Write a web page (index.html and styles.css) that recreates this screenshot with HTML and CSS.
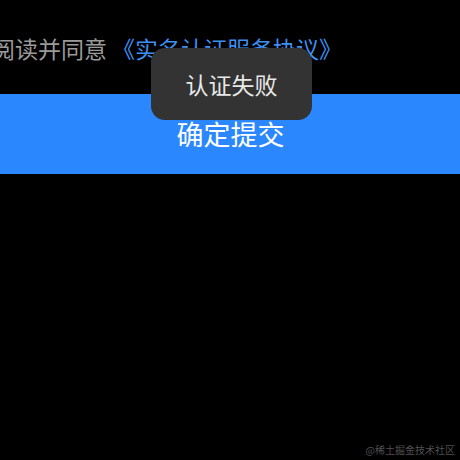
FILE: index.html
```html
<!DOCTYPE html>
<html lang="zh">
<head>
<meta charset="utf-8">
<link rel="stylesheet" href="styles.css">
</head>
<body>
<div class="page">
  <div class="agree">阅读并同意<span class="link">《实名认证服务协议》</span></div>
  <div class="submit">确定提交</div>
  <div class="toast">认证失败</div>
  <div class="watermark">@稀土掘金技术社区</div>
</div>
</body>
</html>
```
FILE: styles.css
```css
html, body {
  margin: 0;
  padding: 0;
  background: #000;
}
.page {
  position: relative;
  width: 460px;
  height: 460px;
  overflow: hidden;
  font-family: "Noto Sans CJK SC", "Noto Sans", sans-serif;
}
.agree {
  margin: 32px 0 0 -8px;
  height: 32px;
  line-height: 32px;
  font-size: 23px;
  color: #9a9a9a;
  white-space: nowrap;
}
.link {
  margin-left: 5px;
  color: #3d8ff2;
}
.submit {
  margin-top: 30px;
  height: 80px;
  background: #2b87fd;
  color: #fff;
  font-size: 27px;
  line-height: 80px;
  text-align: center;
  padding-left: 1px;
}
.toast {
  position: absolute;
  left: 151px;
  top: 48px;
  width: 161px;
  height: 72px;
  border-radius: 14px;
  background: #333333;
  color: #e8e8e8;
  font-size: 23px;
  line-height: 72px;
  text-align: center;
}
.watermark {
  position: absolute;
  right: 5px;
  bottom: 3px;
  font-size: 10px;
  line-height: 14px;
  color: #505050;
}
```
